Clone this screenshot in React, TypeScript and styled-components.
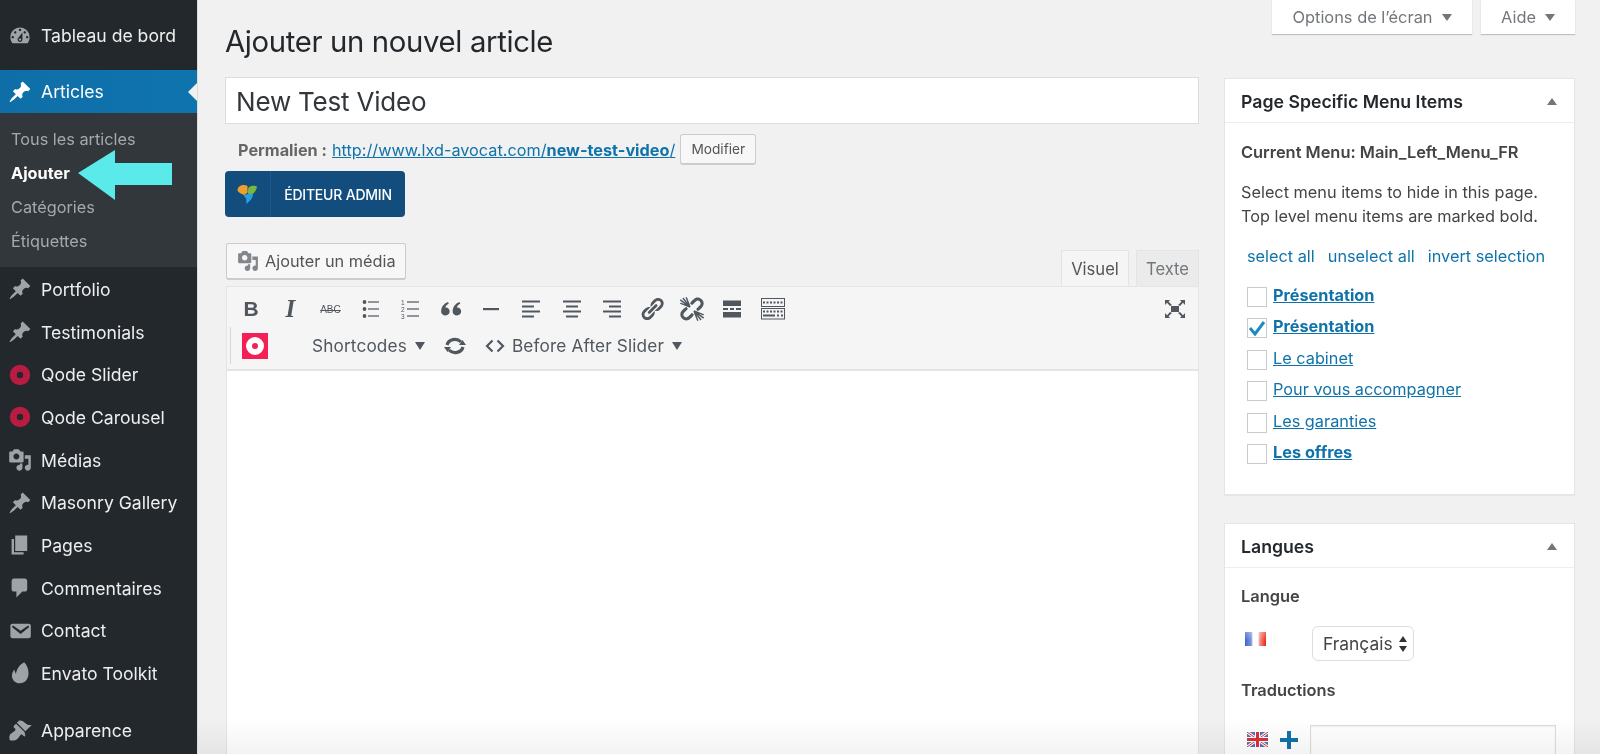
import React from "react";
import styled, { createGlobalStyle } from "styled-components";

const Global = createGlobalStyle`
  html, body { margin: 0; padding: 0; height: 100%; background: #f1f1f1; overflow: hidden; }
  * { box-sizing: border-box; }
  body { font-family: Inter, "Liberation Sans", sans-serif; color: #444; }
`;

const Page = styled.div`
  position: relative; display: flex; width: 1600px; height: 754px; overflow: hidden; background: #f1f1f1;
`;
const Side = styled.nav`
  position: relative; width: 198px; flex: none; background: #23282d; border-right: 1px solid #dcdcdc; padding-top: 14px;
`;
const MenuItem = styled.div<{ $active?: boolean; $gap?: string }>`
  position: relative; display: flex; align-items: center; height: ${p => (p.$active ? "43px" : "42.67px")};
  margin-top: ${p => p.$gap ?? "0"};
  padding: 1px 0 0 8px; gap: 9px; font-size: 17.6px; color: #eee;
  background: ${p => (p.$active ? "linear-gradient(90deg,#0f6ea8,#0f74ae)" : "transparent")};
  color: ${p => (p.$active ? "#fff" : "#eee")};
  svg { flex: none; }
`;
const ActiveNotch = styled.span`
  position: absolute; right: 0; top: 13px; border: 9.5px solid transparent; border-right-color: #f1f1f1; border-left-width: 0;
`;
const Sub = styled.div`
  background: #32373c; padding: 8px 0 10px; margin-bottom: 1px;
`;
const SubItem = styled.div<{ $on?: boolean }>`
  height: 34px; line-height: 36px; padding-left: 11px; font-size: 16.3px;
  font-weight: ${p => (p.$on ? 700 : 400)};
  color: ${p => (p.$on ? "#fff" : "#a6a9ac")};
`;
const CyanArrow = styled.svg`
  position: absolute; left: 78px; top: 150px;
`;
const Main = styled.main`
  flex: 1; padding: 0 25px 0 27px; min-width: 0;
`;
const Header = styled.header`
  display: flex; justify-content: space-between; align-items: flex-start; height: 77px;
`;
const Title = styled.h1`
  margin: 25px 0 0; font-size: 29.3px; line-height: 34px; font-weight: 400; color: #23282d; letter-spacing: -0.35px;
`;
const MetaBar = styled.div`
  display: flex; gap: 9px;
`;
const MetaTab = styled.div<{ $w: number }>`
  width: ${p => p.$w}px; height: 34px; background: #fff; box-shadow: 0 1px 1px rgba(0,0,0,.2);
  display: flex; align-items: center; justify-content: center; gap: 9px; color: #72777c; font-size: 16.4px;
`;
const Caret = styled.i<{ $c?: string; $s?: number }>`
  display: inline-block; width: 0; height: 0; border-style: solid;
  border-width: ${p => p.$s ?? 7}px ${p => (p.$s ?? 7) * 0.72}px 0; border-color: ${p => p.$c ?? "#72777c"} transparent transparent;
`;
const Columns = styled.div`
  display: grid; grid-template-columns: 974px 351px; column-gap: 25px; align-items: start;
`;
const TitleBox = styled.div`
  height: 47px; background: #fff; border: 1px solid #ddd; padding-left: 10px; line-height: 47px; font-size: 26px; color: #32373c; letter-spacing: -0.2px;
`;
const Perma = styled.div`
  display: flex; align-items: center; height: 31px; margin-top: 10px; padding-left: 13px; font-size: 16.25px; color: #666;
  b { margin-right: 5px; }
  a { color: #0f73aa; text-decoration: underline; }
`;
const SmallBtn = styled.div`
  margin-left: 5px; width: 76px; height: 31px; background: #f7f7f7; border: 1px solid #ccc; border-bottom-width: 2px; border-radius: 3px;
  display: flex; align-items: center; justify-content: center; font-size: 13.7px; color: #555;
`;
const VcBtn = styled.div`
  display: flex; width: 180px; height: 46px; margin-top: 6px; background: #134d7e; border-radius: 4px; color: #fff; font-size: 14px; font-weight: 500;
`;
const VcIcon = styled.div`
  width: 46px; display: flex; align-items: center; justify-content: center; border-right: 1px solid #1a5a8e;
`;
const VcLabel = styled.div`
  flex: 1; display: flex; align-items: center; justify-content: center; letter-spacing: -0.2px;
`;
const EditorTop = styled.div`
  display: flex; justify-content: space-between; height: 43px; margin-top: 26px; padding-left: 1px;
`;
const MediaBtn = styled.div`
  display: flex; align-items: center; gap: 6px; width: 180px; height: 37px; padding-left: 10px; background: #f7f7f7; border: 1px solid #ccc; border-bottom-width: 2px; border-radius: 3px;
  font-size: 16.3px; color: #555;
`;
const Tabs = styled.div`
  display: flex; gap: 7px; align-items: flex-end;
`;
const TabBtn = styled.div<{ $on?: boolean }>`
  height: 36px; width: ${p => (p.$on ? 68 : 63)}px; display: flex; align-items: center; justify-content: center; font-size: 16.6px; color: #555;
  border: 1px solid #e4e4e4; background: ${p => (p.$on ? "#f5f5f5" : "#ebebeb")}; border-bottom: 0; position: relative;
  ${p => (p.$on ? "color:#555;margin-bottom:-1px;height:37px;" : "color:#72777c;")}
`;
const Toolbar = styled.div`
  position: relative; height: 85px; background: #f5f5f5; border: 1px solid #e5e5e5; border-bottom-width: 2px; margin-left: 1px; padding-left: 3px;
`;
const Row = styled.div`
  display: flex; align-items: center; height: 36px;
`;
const RowOne = styled(Row)`
  margin-top: 4px; justify-content: space-between; padding-right: 12px;
`;
const RowTwo = styled(Row)`
  margin-top: 0; height: 37px; color: #50575e; font-size: 17.2px;
`;
const Tool = styled.div`
  width: 40.2px; height: 30px; flex: none; display: flex; align-items: center; justify-content: center; color: #50575e;
`;
const ToolGroup = styled.div`
  display: flex;
`;
const BoldT = styled.span`
  font: 700 21px "Liberation Sans", sans-serif; margin-left: 2px;
`;
const ItalT = styled.span`
  font: italic 700 25px "Liberation Serif", serif;
`;
const StrikeT = styled.span`
  font: 400 10px "Liberation Sans", sans-serif; text-decoration: line-through;
`;
const Sep = styled.div`
  width: 1px; height: 37px; background: #d5d5d5;
`;
const Qode = styled.div`
  width: 26px; height: 26px; margin-left: 11px; background: #f31f55; display: flex; align-items: center; justify-content: center;
`;
const RowText = styled.span<{ $l: number }>`
  margin-left: ${p => p.$l}px; letter-spacing: 0.15px;
`;
const IconSlot = styled.span<{ $l: number }>`
  display: flex; margin-left: ${p => p.$l}px;
`;
const EditorBody = styled.div`
  height: 400px; background: #fff; border-left: 1px solid #e5e5e5; border-right: 1px solid #e5e5e5; margin-left: 1px;
`;
const SideCol = styled.aside`
  display: flex; flex-direction: column; gap: 28px; margin-top: 1px;
`;
const Box = styled.section`
  background: #fff; border: 1px solid #e5e5e5; box-shadow: 0 1px 1px rgba(0,0,0,.04);
`;
const BoxHead = styled.div`
  display: flex; align-items: center; justify-content: space-between; height: 44px; padding: 1px 17px 0 16px; border-bottom: 1px solid #eee;
  font-size: 17.7px; font-weight: 600; color: #23282d;
`;
const UpCaret = styled.i`
  width: 0; height: 0; border-style: solid; border-width: 0 5px 7px; border-color: transparent transparent #72777c;
`;
const BoxBody = styled.div<{ $h: number }>`
  height: ${p => p.$h}px; padding: 0 16px; font-size: 16.3px; color: #444;
`;
const Strong = styled.div<{ $t: number }>`
  margin-top: ${p => p.$t}px; font-weight: 600; font-size: 16.4px; line-height: 20px; color: #444;
`;
const Para = styled.p`
  margin: 18px 0 0; line-height: 24px; font-size: 16.3px; color: #444;
`;
const QuickLinks = styled.div`
  display: flex; gap: 13px; margin: 18px 0 0 6px; line-height: 20px; color: #0f73aa;
`;
const CheckList = styled.div`
  margin: 15px 0 0 6px;
`;
const CheckRow = styled.div`
  display: flex; align-items: center; gap: 6px; height: 31.5px;
`;
const CheckBox = styled.span`
  width: 20px; height: 20px; flex: none; border: 1.5px solid #c8cbce; background: #fff; display: flex; align-items: center; justify-content: center;
`;
const CheckLink = styled.a<{ $b?: boolean }>`
  color: #0f73aa; text-decoration: underline; font-weight: ${p => (p.$b ? 700 : 400)}; position: relative; top: -2px;
`;
const LangRow = styled.div`
  display: flex; align-items: flex-start; margin-top: 20px; padding-left: 4px;
`;
const FlagFr = styled.span`
  width: 21px; height: 14px; margin-top: 6px; flex: none;
  background: linear-gradient(180deg,rgba(255,255,255,.3),rgba(255,255,255,0) 60%),
    linear-gradient(90deg,#3f63c6 0,#7d97e0 30%,#fff 38% 62%,#f5938c 70%,#e6241d 100%);
`;
const SelectBox = styled.div`
  display: flex; align-items: center; justify-content: space-between; width: 102px; height: 35px; margin-left: 46px; padding: 0 5px 0 10px; border: 1px solid #ddd; border-radius: 6px; font-size: 17.4px; color: #444;
`;
const Updown = styled.svg`flex: none;`;
const TransRow = styled.div`
  display: flex; align-items: flex-start; margin-top: 25px; padding-left: 6px;
`;
const UkWrap = styled.span`
  display: flex; margin-top: 7px; flex: none;
`;
const Plus = styled.svg`
  margin: 6px 0 0 12px; flex: none;
`;
const TransInput = styled.div`
  width: 246px; height: 50px; margin-left: 12px; border: 1px solid #ddd; background: #fff; box-shadow: inset 0 1px 2px rgba(0,0,0,.07);
`;
const BottomFade = styled.div`
  position: absolute; left: 198px; right: 0; bottom: 0; height: 36px; background: linear-gradient(#fff, #f3f3f3);
  mix-blend-mode: multiply; pointer-events: none;
`;

const P = {
  pin: "M10.44 3.02l1.82-1.82 6.36 6.35-1.83 1.82c-1.05-.68-2.48-.57-3.41.36l-.75.75c-.92.93-1.04 2.35-.35 3.41l-1.83 1.82-2.41-2.41-2.8 2.79c-.42.42-3.38 2.71-3.8 2.29s1.86-3.39 2.28-3.81l2.79-2.79L4.1 9.36l1.83-1.82c1.05.69 2.48.57 3.4-.36l.75-.75c.93-.92 1.05-2.35.36-3.41z",
  dash: "M3.76 16h12.48c1.1-1.37 1.76-3.11 1.76-5 0-4.42-3.58-8-8-8s-8 3.58-8 8c0 1.89.66 3.63 1.76 5zM10 4c.55 0 1 .45 1 1s-.45 1-1 1-1-.45-1-1 .45-1 1-1zM6 6c.55 0 1 .45 1 1s-.45 1-1 1-1-.45-1-1 .45-1 1-1zm8 0c.55 0 1 .45 1 1s-.45 1-1 1-1-.45-1-1 .45-1 1-1zm-5.37 5.55L12 7v6c0 1.1-.9 2-2 2s-2-.9-2-2c0-.57.24-1.08.63-1.45zM4 10c.55 0 1 .45 1 1s-.45 1-1 1-1-.45-1-1 .45-1 1-1zm12 0c.55 0 1 .45 1 1s-.45 1-1 1-1-.45-1-1 .45-1 1-1zm-5 3c0-.55-.45-1-1-1s-1 .45-1 1 .45 1 1 1 1-.45 1-1z",
  media: "M13 11V4c0-.55-.45-1-1-1h-1.67L9 1H5L3.67 3H2c-.55 0-1 .45-1 1v7c0 .55.45 1 1 1h10c.55 0 1-.45 1-1zM7 4.5c1.38 0 2.5 1.12 2.5 2.5S8.38 9.5 7 9.5 4.5 8.38 4.5 7 5.62 4.5 7 4.5zM14 6h5v10.5c0 1.38-1.12 2.5-2.5 2.5S14 17.88 14 16.5s1.12-2.5 2.5-2.5c.17 0 .34.02.5.05V9h-3V6zm-4 8.05V13h2v3.5c0 1.38-1.12 2.5-2.5 2.5S7 17.88 7 16.5 8.12 14 9.5 14c.17 0 .34.02.5.05z",
  page: "M6 15V2h10v13H6zm-1 1h8v2H3V5h2v11z",
  comment: "M5 2h9c1.1 0 2 .9 2 2v7c0 1.1-.9 2-2 2h-2l-5 5v-5H5c-1.1 0-2-.9-2-2V4c0-1.1.9-2 2-2z",
  mail: "M3.87 4h13.25C18.37 4 19 4.59 19 5.79v8.42c0 1.19-.63 1.79-1.88 1.79H3.87c-1.25 0-1.88-.6-1.88-1.79V5.79c0-1.2.63-1.79 1.88-1.79zm6.62 8.6l6.74-5.53c.24-.2.43-.66.13-1.07-.29-.41-.82-.42-1.17-.17l-5.7 3.86L4.8 5.83c-.35-.25-.88-.24-1.17.17-.3.41-.11.87.13 1.07z",
  leaf: "M13.500 1c2.300 2.400 3.600 5.500 3.600 9 0 5-3 8.600-7.300 8.600-3.800 0-6.500-2.700-6.500-6.300 0-2 .9-4 2.100-5.300.1 1.500.5 2.700 1.200 3.700C7.300 6.300 9.800 3 13.500 1z",
  brush: "M14.48 11.06L7.41 3.99l1.5-1.5c.5-.56 2.3-.47 3.51.32 1.21.8 1.43 1.28 2.91 2.1 1.18.64 2.45 1.26 4.45.85zm-.71.71L6.7 4.7 4.93 6.47c-.39.39-.39 1.02 0 1.41l1.06 1.06c.39.39.39 1.03 0 1.42-.6.6-1.43 1.11-2.21 1.69-.35.26-.7.53-1.01.84C1.43 13.23.78 15.82 1.3 17.25L.95 17.6l1.41 1.41.35-.35c1.43.52 4.02-.13 5.34-1.47.31-.31.58-.66.84-1.01.58-.78 1.09-1.61 1.69-2.21.39-.39 1.03-.39 1.42 0l1.06 1.06c.39.39 1.02.39 1.41 0z",
  link: "M17.74 2.76c1.68 1.69 1.68 4.41 0 6.1l-1.53 1.52c-1.12 1.12-2.7 1.47-4.14 1.09l2.62-2.61.76-.77.76-.76c.84-.84.84-2.2 0-3.04-.84-.85-2.2-.85-3.04 0l-.77.76-3.38 3.38c-.37-1.44-.02-3.02 1.1-4.14l1.52-1.53c1.69-1.68 4.42-1.68 6.1 0zM8.59 13.43l5.34-5.34c.42-.42.42-1.1 0-1.52-.44-.43-1.13-.39-1.53 0l-5.33 5.34c-.42.42-.42 1.1 0 1.52.44.43 1.13.39 1.52 0zm-.76 2.29l4.14-4.15c.38 1.44.03 3.02-1.09 4.14l-1.52 1.53c-1.69 1.68-4.41 1.68-6.1 0-1.68-1.68-1.68-4.42 0-6.1l1.53-1.52c1.12-1.12 2.7-1.47 4.14-1.1l-4.14 4.15c-.85.84-.85 2.2 0 3.05.84.84 2.2.84 3.04 0z",
  unlinkLoops: "M17.74 2.76c1.68 1.69 1.68 4.41 0 6.1l-1.53 1.52c-1.12 1.12-2.7 1.47-4.14 1.09l2.62-2.61.76-.77.76-.76c.84-.84.84-2.2 0-3.04-.84-.85-2.2-.85-3.04 0l-.77.76-3.38 3.38c-.37-1.44-.02-3.02 1.1-4.14l1.52-1.53c1.69-1.68 4.42-1.68 6.1 0zM7.830 15.720l4.14-4.15c.38 1.44.03 3.02-1.09 4.14l-1.52 1.53c-1.69 1.68-4.41 1.68-6.1 0-1.68-1.68-1.68-4.42 0-6.1l1.53-1.52c1.12-1.12 2.7-1.47 4.14-1.1l-4.14 4.15c-.85.84-.85 2.2 0 3.05.84.84 2.2.84 3.04 0z",
};

const Ico = ({ d, s = 24, c = "#9ea3a8" }: { d: string; s?: number; c?: string }) => (
  <svg width={s} height={s} viewBox="0 0 20 20" fill={c}><path d={d} /></svg>
);
const Ring = () => (
  <svg width="24" height="24" viewBox="0 0 24 24"><circle cx="12" cy="12" r="6.700" fill="none" stroke="#b81c41" strokeWidth="7" /></svg>
);

const EC = "#50575e";
const Lines = ({ xs }: { xs: [number, number][] }) => (
  <svg width="20" height="20" viewBox="0 0 20 20" stroke={EC} strokeWidth="2">
    {xs.map(([a, b], i) => <line key={i} x1={a} x2={b} y1={2.5 + i * 5} y2={2.5 + i * 5} />)}
  </svg>
);
const BulList = () => (
  <svg width="20" height="20" viewBox="0 0 20 20" fill={EC}>
    {[3, 10, 17].map(y => <g key={y}><circle cx="3.5" cy={y} r="1.9" /><rect x="7" y={y - 0.6} width="11" height="1.2" /></g>)}
  </svg>
);
const NumList = () => (
  <svg width="20" height="20" viewBox="0 0 20 20" fill={EC}>
    {[3, 10, 17].map((y, i) => <g key={y}><text x="0" y={y + 2.5} fontSize="6.5" fontFamily="Liberation Sans">{i + 1}</text><rect x="6" y={y - 0.6} width="12" height="1.2" /></g>)}
  </svg>
);
const Quote = () => (
  <svg width="23" height="23" viewBox="0 0 20 20" fill={EC}>
    <path d="M1 12c0-4 2-7 6-8.500l.6 1.400C5.800 5.800 4.800 7 4.700 8.300 7 8.100 8.400 9.800 8.400 11.800c0 2-1.500 3.400-3.500 3.400C2.500 15.200 1 13.800 1 12zM11 12c0-4 2-7 6-8.500l.6 1.400c-1.800.9-2.800 2.100-2.900 3.400 2.300-.2 3.700 1.500 3.700 3.500 0 2-1.500 3.400-3.500 3.400-2.400 0-3.900-1.400-3.900-3.200z" />
  </svg>
);
const Hr = () => <svg width="20" height="20" viewBox="0 0 20 20" fill={EC}><rect x="2" y="9" width="16" height="2.200" /></svg>;
const Unlink = () => (
  <svg width="26" height="26" viewBox="0 0 20 20" fill={EC}>
    <path d="M17.740 2.760c1.680 1.690 1.680 4.410 0 6.100l-1.530 1.520c-.6.600-1.300 1-2.100 1.200l-.9-1.600 2.800-2.800c.840-.840.840-2.200 0-3.040-.840-.850-2.200-.850-3.040 0l-2.800 2.800-1.600-.9c.2-.8.600-1.500 1.200-2.100l1.520-1.530c1.690-1.680 4.420-1.680 6.100 0z" />
    <path d="M2.260 17.240c-1.680-1.690-1.680-4.410 0-6.100l1.530-1.520c.6-.6 1.300-1 2.100-1.200l.9 1.600-2.800 2.800c-.840.840-.840 2.200 0 3.040.840.850 2.200.850 3.040 0l2.800-2.800 1.600.9c-.2.800-.6 1.500-1.200 2.100l-1.520 1.530c-1.690 1.680-4.420 1.680-6.100 0z" />
    <path stroke={EC} strokeWidth="1.100" fill="none" d="M8.500 8.500L3 1.500M8.500 8.500L5.500 1M8.500 8.500L1 3M8.500 8.500L1 5.500M11.500 11.500l5.500 7M11.500 11.500l3 7.500M11.500 11.500l7.500 5.500M11.500 11.500l7.500 3" />
  </svg>
);
const More = () => (
  <svg width="20" height="20" viewBox="0 0 20 20" fill={EC}>
    <rect x="1" y="1.500" width="18" height="5.500" /><rect x="1" y="13" width="18" height="5.500" />
    <rect x="1" y="9" width="5" height="2" /><rect x="8" y="9" width="4" height="2" /><rect x="14" y="9" width="5" height="2" />
  </svg>
);
const Kitchen = () => (
  <svg width="24" height="22" viewBox="0 0 24 22">
    <rect x="0.500" y="0.500" width="23" height="8" fill="none" stroke={EC} />
    <rect x="0.500" y="10.500" width="23" height="10.500" fill="none" stroke={EC} />
    <path stroke={EC} strokeDasharray="2 1.500" strokeWidth="2" d="M2 4.500h20M2 13.500h20" />
    <path stroke={EC} strokeWidth="2" d="M2 17.500h12M16 17.500h2M20 17.500h2" />
  </svg>
);
const Fullscreen = () => (
  <svg width="22" height="20" viewBox="0 0 22 20" fill={EC}>
    <rect x="7" y="7" width="8" height="6" />
    <path d="M1 1h5L4.500 2.700 8 6 6 7 3 3.800 1 6zM21 1h-5l1.500 1.700L14 6l2 1 3-3.200L21 6zM1 19h5l-1.500-1.700L8 14l-2-1-3 3.200L1 14zM21 19h-5l1.500-1.700L14 14l2-1 3 3.200 2-2.200z" />
  </svg>
);
const Refresh = () => (
  <svg width="22" height="20" viewBox="0 0 22 20" fill="none" stroke={EC} strokeWidth="3.200">
    <path d="M3 9a8 7 0 0 1 14-3" /><path d="M19 11a8 7 0 0 1-14 3" />
    <path fill={EC} stroke="none" d="M15 9h7l-3.500-5zM7 11H0l3.500 5z" />
  </svg>
);
const Code = () => (
  <svg width="20" height="14" viewBox="0 0 20 14" fill="none" stroke={EC} strokeWidth="2.200">
    <path d="M7.500 1.500L2 7l5.500 5.500M12.500 1.500L18 7l-5.500 5.500" />
  </svg>
);
const QodeGlyph = () => (
  <svg width="20" height="20" viewBox="0 0 20 20"><circle cx="10" cy="10" r="6" fill="#f31f55" stroke="#fff" strokeWidth="6" /></svg>
);
const VcLogo = () => (
  <svg width="21" height="22" viewBox="0 0 21 22">
    <path fill="#ef9f2b" d="M4 2.500C6 1.800 8.500 1.800 10.500 3v6.500L7.500 12C5 11.500 1 9.500.5 7 .8 5 2 3.300 4 2.500z" />
    <path fill="#7cb53f" d="M11.500 4.500C14 2.500 17 2.300 20 3.500c-.5 3-2 6-4.500 7.500l-3.500 1-1.500-3z" />
    <path fill="#28a0e4" d="M6.500 12.500l4-1.500 5.500 0c-.2 3-1.500 5.800-4 7.500L9.500 21l-.3-5.500z" />
  </svg>
);
const UkFlag = () => (
  <svg width="21" height="15" viewBox="0 0 21 15">
    <rect width="21" height="15" fill="#5b6fb8" />
    <path stroke="#fff" strokeWidth="3" d="M0 0l21 15M21 0L0 15" />
    <path stroke="#d9303a" strokeWidth="1" d="M0 0l21 15M21 0L0 15" />
    <path stroke="#fff" strokeWidth="5" d="M10.500 0v15M0 7.500h21" />
    <path stroke="#d9303a" strokeWidth="3" d="M10.500 0v15M0 7.500h21" />
  </svg>
);

const menuA: [string, React.ReactNode][] = [
  ["Portfolio", <Ico d={P.pin} />],
  ["Testimonials", <Ico d={P.pin} />],
  ["Qode Slider", <Ring />],
  ["Qode Carousel", <Ring />],
  ["Médias", <Ico d={P.media} />],
  ["Masonry Gallery", <Ico d={P.pin} />],
  ["Pages", <Ico d={P.page} />],
  ["Commentaires", <Ico d={P.comment} />],
  ["Contact", <Ico d={P.mail} />],
  ["Envato Toolkit", <Ico d={P.leaf} />],
];

const checks: [string, boolean, boolean][] = [
  ["Présentation", true, false],
  ["Présentation", true, true],
  ["Le cabinet", false, false],
  ["Pour vous accompagner", false, false],
  ["Les garanties", false, false],
  ["Les offres", true, false],
];

export default function App() {
  return (
    <Page>
      <Global />
      <Side>
        <MenuItem><Ico d={P.dash} />Tableau de bord</MenuItem>
        <MenuItem $active $gap="13px"><Ico d={P.pin} c="#fff" />Articles<ActiveNotch /></MenuItem>
        <Sub>
          <SubItem>Tous les articles</SubItem>
          <SubItem $on>Ajouter</SubItem>
          <SubItem>Catégories</SubItem>
          <SubItem>Étiquettes</SubItem>
        </Sub>
        {menuA.map(([t, ic]) => <MenuItem key={t}>{ic}{t}</MenuItem>)}
        <MenuItem $gap="14px"><Ico d={P.brush} />Apparence</MenuItem>
        <CyanArrow width="95" height="50" viewBox="0 0 95 50"><path fill="#5aeaea" d="M0 23L37 0v13h57v22H37v15z" /></CyanArrow>
      </Side>
      <Main>
        <Header>
          <Title>Ajouter un nouvel article</Title>
          <MetaBar>
            <MetaTab $w={200}>Options de l’écran <Caret /></MetaTab>
            <MetaTab $w={94}>Aide <Caret /></MetaTab>
          </MetaBar>
        </Header>
        <Columns>
          <div>
            <TitleBox>New Test Video</TitleBox>
            <Perma>
              <b>Permalien :</b>
              <a>http://www.lxd-avocat.com/<b style={{ margin: 0 }}>new-test-video</b>/</a>
              <SmallBtn>Modifier</SmallBtn>
            </Perma>
            <VcBtn><VcIcon><VcLogo /></VcIcon><VcLabel>ÉDITEUR ADMIN</VcLabel></VcBtn>
            <EditorTop>
              <MediaBtn><Ico d={P.media} s={22} c="#82878c" />Ajouter un média</MediaBtn>
              <Tabs><TabBtn $on>Visuel</TabBtn><TabBtn>Texte</TabBtn></Tabs>
            </EditorTop>
            <Toolbar>
              <RowOne>
                <ToolGroup>
                  <Tool><BoldT>B</BoldT></Tool>
                  <Tool><ItalT>I</ItalT></Tool>
                  <Tool><StrikeT>ABC</StrikeT></Tool>
                  <Tool><BulList /></Tool>
                  <Tool><NumList /></Tool>
                  <Tool><Quote /></Tool>
                  <Tool><Hr /></Tool>
                  <Tool><Lines xs={[[1, 19], [1, 13], [1, 19], [1, 13]]} /></Tool>
                  <Tool><Lines xs={[[1, 19], [4, 16], [1, 19], [4, 16]]} /></Tool>
                  <Tool><Lines xs={[[1, 19], [7, 19], [1, 19], [7, 19]]} /></Tool>
                  <Tool><Ico d={P.link} c={EC} s={26} /></Tool>
                  <Tool><Unlink /></Tool>
                  <Tool><More /></Tool>
                  <Tool><Kitchen /></Tool>
                </ToolGroup>
                <Fullscreen />
              </RowOne>
              <RowTwo>
                <Sep />
                <Qode><QodeGlyph /></Qode>
                <RowText $l={44}>Shortcodes</RowText>
                <IconSlot $l={8}><Caret $c="#50575e" $s={8} /></IconSlot>
                <IconSlot $l={19}><Refresh /></IconSlot>
                <IconSlot $l={19}><Code /></IconSlot>
                <RowText $l={7}>Before After Slider</RowText>
                <IconSlot $l={8}><Caret $c="#50575e" $s={8} /></IconSlot>
              </RowTwo>
            </Toolbar>
            <EditorBody />
          </div>
          <SideCol>
            <Box>
              <BoxHead>Page Specific Menu Items<UpCaret /></BoxHead>
              <BoxBody $h={352}>
                <Strong $t={19}>Current Menu: Main_Left_Menu_FR</Strong>
                <Para>Select menu items to hide in this page.<br />Top level menu items are marked bold.</Para>
                <QuickLinks><span>select all</span><span>unselect all</span><span>invert selection</span></QuickLinks>
                <CheckList>
                  {checks.map(([t, b, on], i) => (
                    <CheckRow key={i}>
                      <CheckBox>{on && <svg width="18" height="16" viewBox="0 0 18 16"><path d="M2 8l5 6L16 2" fill="none" stroke="#1e8cbe" strokeWidth="3" /></svg>}</CheckBox>
                      <CheckLink $b={b}>{t}</CheckLink>
                    </CheckRow>
                  ))}
                </CheckList>
              </BoxBody>
            </Box>
            <Box>
              <BoxHead>Langues<UpCaret /></BoxHead>
              <BoxBody $h={300}>
                <Strong $t={18}>Langue</Strong>
                <LangRow>
                  <FlagFr />
                  <SelectBox>Français
                    <Updown width="10" height="18" viewBox="0 0 10 18" fill="#333"><path d="M5 1l4 6H1zM5 17l4-6H1z" /></Updown>
                  </SelectBox>
                </LangRow>
                <Strong $t={19}>Traductions</Strong>
                <TransRow>
                  <UkWrap><UkFlag /></UkWrap>
                  <Plus width="18" height="18" viewBox="0 0 18 18"><path fill="#0f73aa" d="M7 0h4v7h7v4h-7v7H7v-7H0V7h7z" /></Plus>
                  <TransInput />
                </TransRow>
              </BoxBody>
            </Box>
          </SideCol>
        </Columns>
      </Main>
      <BottomFade />
    </Page>
  );
}
